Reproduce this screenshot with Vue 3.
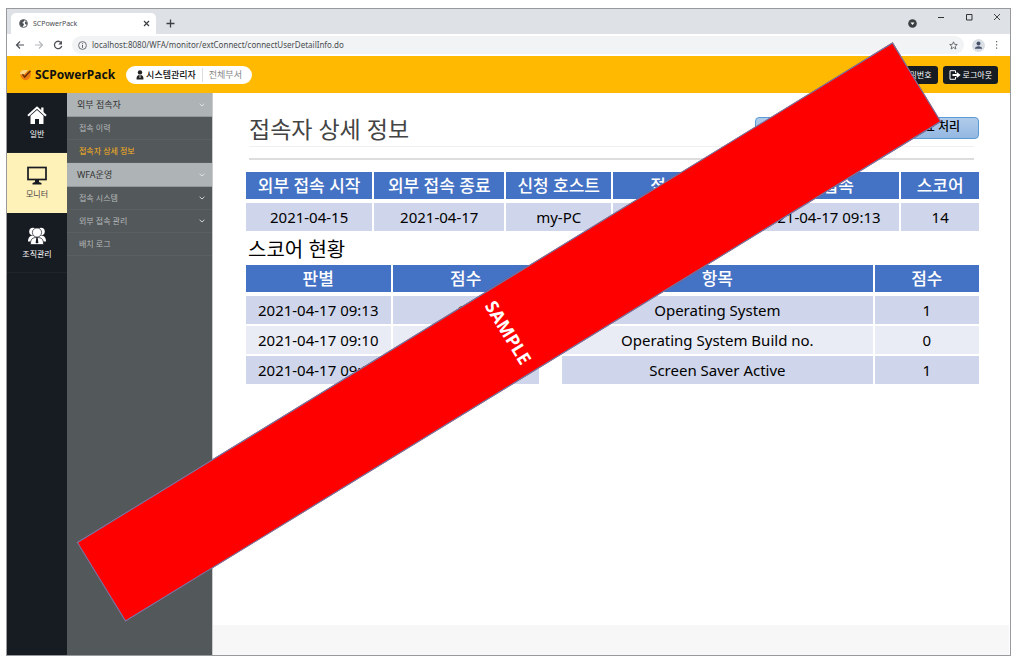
<script setup>
const rail = [
  { label: '일반', icon: 'home' },
  { label: '모니터', icon: 'monitor', active: true },
  { label: '조직관리', icon: 'people' },
]

const groups = [
  {
    title: '외부 접속자',
    items: [{ label: '접속 이력' }, { label: '접속자 상세 정보', active: true }],
  },
  {
    title: 'WFA운영',
    items: [
      { label: '접속 시스템', more: true },
      { label: '외부 접속 관리', more: true },
      { label: '배치 로그' },
    ],
  },
]

const sessionHead = ['외부 접속 시작', '외부 접속 종료', '신청 호스트', '접속 IP', '최종 접속', '스코어']
const sessionRow = ['2021-04-15', '2021-04-17', 'my-PC', '', '2021-04-17 09:13', '14']

const history = [
  ['2021-04-17 09:13', '14'],
  ['2021-04-17 09:10', ''],
  ['2021-04-17 09:07', ''],
]
const checks = [
  ['Operating System', '1'],
  ['Operating System Build no.', '0'],
  ['Screen Saver Active', '1'],
]
</script>

<template>
  <div class="page">
    <div class="window">
      <div class="tabstrip">
        <div class="tab">
          <svg class="globe" viewBox="0 0 10 10"><circle cx="5" cy="5" r="4.400" fill="none" stroke="#4d5156" stroke-width="1" /><path d="M1 3.500C2 1.200 4.500.6 6 1c.5 1-.8 1.200-1 2-.3.900-1.300.6-1.400 1.400 1 .3 2.100.5 1.900 1.700-.2 1-1.100 1.200-1.300 2.800C2 8.500.4 6 1 3.500zM7.500 2.500C8.800 3.500 9.200 5 8.800 6.300 8 6.500 7.300 6 6.800 5.200 6.300 4.300 6.600 3 7.500 2.500z" fill="#4d5156" /></svg>
          <span class="tab-title">SCPowerPack</span>
          <button class="plain" aria-label="Close tab"><svg width="7" height="7" viewBox="0 0 7 7"><path d="M1 1l5 5M6 1L1 6" stroke="#3c4043" stroke-width="1.200" /></svg></button>
        </div>
        <button class="plain new-tab" aria-label="New tab"><svg width="9" height="9" viewBox="0 0 9 9"><path d="M4.500 .5v8M.5 4.500h8" stroke="#3c4043" stroke-width="1.300" /></svg></button>
        <div class="window-buttons">
          <button class="plain guest" aria-label="Search tabs"><svg width="9" height="9" viewBox="0 0 9 9"><circle cx="4.500" cy="4.500" r="4.300" fill="#3c4043" /><path d="M2.500 3.500h4l-2 2.500z" fill="#fff" /></svg></button>
          <button class="plain" aria-label="Minimize"><svg width="8" height="8" viewBox="0 0 8 8"><path d="M1 4.500h6" stroke="#333" /></svg></button>
          <button class="plain" aria-label="Maximize"><svg width="8" height="8" viewBox="0 0 8 8"><path d="M1.500 1.500h5.500v5.500H1.500z" fill="none" stroke="#333" /></svg></button>
          <button class="plain" aria-label="Close"><svg width="8" height="8" viewBox="0 0 8 8"><path d="M1 1l6 6M7 1L1 7" stroke="#333" stroke-width=".9" /></svg></button>
        </div>
      </div>

      <div class="toolbar">
        <button class="plain" aria-label="Back"><svg width="10" height="10" viewBox="0 0 10 10"><path d="M9 5H1.500M5 1.500L1.500 5 5 8.500" fill="none" stroke="#4d5156" stroke-width="1.200" /></svg></button>
        <button class="plain" aria-label="Forward"><svg width="10" height="10" viewBox="0 0 10 10"><path d="M1 5h7.500M5 1.500L8.500 5 5 8.500" fill="none" stroke="#b4b7ba" stroke-width="1.100" /></svg></button>
        <button class="plain" aria-label="Reload"><svg width="10" height="10" viewBox="0 0 10 10"><path d="M8 2.600A3.700 3.700 0 1 0 8.700 6" fill="none" stroke="#4d5156" stroke-width="1.300" /><path d="M9 .8v3.700H5.300z" fill="#4d5156" /></svg></button>
        <div class="address">
          <svg width="9" height="9" viewBox="0 0 9 9"><circle cx="4.500" cy="4.500" r="3.900" fill="none" stroke="#5f6368" stroke-width=".9" /><path d="M4.500 4v2.800M4.500 2.200v1" stroke="#5f6368" /></svg>
          <input class="url" aria-label="Address" value="localhost:8080/WFA/monitor/extConnect/connectUserDetailInfo.do" />
          <button class="plain" aria-label="Bookmark"><svg width="9" height="9" viewBox="0 0 9 9"><path d="M4.500 .8l1.100 2.500 2.700.2-2.100 1.800.7 2.700-2.400-1.500L2.100 8l.7-2.700L.7 3.500l2.700-.2z" fill="none" stroke="#5f6368" stroke-width=".9" /></svg></button>
        </div>
        <button class="plain avatar" aria-label="Profile"><svg width="13" height="13" viewBox="0 0 13 13"><circle cx="6.500" cy="6.500" r="6.500" fill="#dadfe6" /><circle cx="6.500" cy="4.500" r="2" fill="#46536a" /><path d="M2.800 9.800c0-3.400 7.400-3.400 7.400 0z" fill="#46536a" /></svg></button>
        <button class="plain dots" aria-label="Menu"><svg width="3" height="10" viewBox="0 0 3 10"><path d="M1 1h1.200v1.200H1zM1 4.300h1.200v1.200H1zM1 7.600h1.200v1.200H1z" fill="#5f6368" /></svg></button>
      </div>

      <header class="appbar">
        <a class="brand" href="#">
          <svg width="13" height="12" viewBox="0 0 13 12"><path d="M1.500 2.500C3 1.200 5 1.500 6 1.200l5.500 1.300c.6 2.500.3 4.500-.6 6.200C9 11.500 5.500 12 3.200 9.800 1.500 8.200.8 5 1.500 2.500z" fill="#ee7b12" /><path d="M1.500 2.500C3.500 1 7 .8 9 1.500L4.500 6 1 5z" fill="#ffd780" /><path d="M3.500 5.200l2.200 2.800L11.500 1.800" fill="none" stroke="#6b3208" stroke-width="1.500" /></svg>
          <span>SCPowerPack</span>
        </a>
        <div class="user-pill">
          <svg width="8" height="10" viewBox="0 0 8 10"><circle cx="4" cy="2.400" r="2.200" fill="#222" /><path d="M.6 9.500C.3 6 1.800 4.900 4 4.900S7.700 6 7.400 9.500z" fill="#222" /><path d="M4 5v3" stroke="#fff" stroke-width=".8" /></svg>
          <strong>시스템관리자</strong>
          <span class="dept">전체부서</span>
        </div>
        <div class="account">
          <button class="dark">비밀번호</button>
          <button class="dark">
            <svg width="12" height="10" viewBox="0 0 12 10"><path d="M6.500 3V.7H1v8.600h5.500V7" fill="none" stroke="#fff" stroke-width="1" /><path d="M3.500 4h4.200V1.900L11.700 5 7.700 8.100V6H3.500z" fill="#fff" /></svg>
            로그아웃
          </button>
        </div>
      </header>

      <div class="body">
        <nav class="rail">
          <a v-for="r in rail" :key="r.label" href="#" :class="{ active: r.active }">
            <svg v-if="r.icon === 'home'" width="20" height="19" viewBox="0 0 20 19"><path d="M1 9.800L10 1.500l9 8.300" fill="none" stroke="#fff" stroke-width="2" /><path d="M14.200 1.500h2.300v5.500l-2.300-2z" fill="#fff" /><path d="M3.500 9.800L10 4l6.500 5.800V18H12v-5H8v5H3.500z" fill="#fff" /></svg>
            <svg v-else-if="r.icon === 'monitor'" width="20" height="19" viewBox="0 0 20 19"><rect x="1" y="1.500" width="18" height="12" fill="none" stroke="#171b22" stroke-width="1.700" /><path d="M8 14h4v2l2.500 1v1.500h-9V17L8 16z" fill="#171b22" /></svg>
            <svg v-else width="20" height="19" viewBox="0 0 20 19"><g fill="#fff"><circle cx="6" cy="5.500" r="3.800" /><circle cx="14" cy="5.500" r="3.800" /><path d="M1 15.500c0-4 2-6 5-6h8c3 0 5 2 5 6z" /></g><g fill="#fff" stroke="#171b22" stroke-width=".7"><path d="M3.500 18.500c0-5.500 1.800-7 6.500-7s6.500 1.500 6.500 7z" /><circle cx="10" cy="6.500" r="4.600" /></g><path d="M9.300 11.800h1.400l.6 4.500-1.300 1.500-1.300-1.500z" fill="#171b22" /></svg>
            <span>{{ r.label }}</span>
          </a>
        </nav>

        <nav class="submenu">
          <template v-for="g in groups" :key="g.title">
            <button class="group">
              <span>{{ g.title }}</span>
              <svg width="6" height="4" viewBox="0 0 6 4"><path d="M.6 .8L3 3 5.400 .8" fill="none" stroke="#e1e3e4" /></svg>
            </button>
            <a v-for="i in g.items" :key="i.label" href="#" :class="{ active: i.active }">
              <span>{{ i.label }}</span>
              <svg v-if="i.more" width="6" height="4" viewBox="0 0 6 4"><path d="M.6 .8L3 3 5.400 .8" fill="none" stroke="#d0d3d4" /></svg>
            </a>
          </template>
        </nav>

        <div class="content">
          <main>
            <div class="heading">
              <h1>접속자 상세 정보</h1>
              <button class="action">외부 접속자 강제 종료 처리</button>
            </div>
            <hr />

            <table class="session">
              <colgroup><col class="c17" /><col class="c18" /><col class="c15" /><col class="c17" /><col class="c22" /><col class="c11" /></colgroup>
              <thead>
                <tr><th v-for="h in sessionHead" :key="h">{{ h }}</th></tr>
              </thead>
              <tbody>
                <tr><td v-for="(c, n) in sessionRow" :key="n">{{ c }}</td></tr>
              </tbody>
            </table>

            <h2>스코어 현황</h2>
            <div class="scores">
              <table>
                <colgroup><col class="half" /><col class="half" /></colgroup>
                <thead><tr><th>판별</th><th>점수</th></tr></thead>
                <tbody>
                  <tr v-for="row in history" :key="row[0]"><td v-for="(c, n) in row" :key="n">{{ c }}</td></tr>
                </tbody>
              </table>
              <table>
                <colgroup><col class="wide" /><col class="narrow" /></colgroup>
                <thead><tr><th>항목</th><th>점수</th></tr></thead>
                <tbody>
                  <tr v-for="row in checks" :key="row[0]"><td v-for="(c, n) in row" :key="n">{{ c }}</td></tr>
                </tbody>
              </table>
            </div>
          </main>
          <footer></footer>
        </div>
      </div>

      <div class="ribbon">SAMPLE</div>
    </div>
  </div>
</template>

<style>
body {
  background: #fff;
}
</style>

<style scoped>
.page,
.page * {
  box-sizing: border-box;
}
.page {
  display: flex;
  min-height: 100vh;
  padding: 8px 8px 9px 6px;
  font-family: "Noto Sans", "Noto Sans CJK KR", sans-serif;
  color: #000;
}
.window {
  position: relative;
  flex: 1;
  min-width: 0;
  display: flex;
  flex-direction: column;
  border: 1px solid #97999c;
  background: #fff;
}
button,
input {
  font-family: inherit;
}
a {
  text-decoration: none;
}
svg {
  display: block;
  flex: none;
}
.plain {
  display: flex;
  padding: 0;
  border: 0;
  background: none;
}

.tabstrip {
  display: flex;
  height: 25px;
  background: #dee1e6;
}
.tab {
  display: flex;
  align-items: center;
  width: 145px;
  margin: 4px 0 0 4px;
  padding: 0 6px 0 8px;
  border-radius: 5px 5px 0 0;
  background: #fff;
}
.globe {
  width: 9px;
  height: 9px;
}
.tab-title {
  flex: 1;
  margin-left: 5px;
  font-size: 7px;
  line-height: 12px;
  color: #4a4d51;
}
.new-tab {
  align-items: center;
  margin: 4px 0 0 10px;
}
.window-buttons {
  display: flex;
  gap: 20px;
  margin: 4px 9px 0 auto;
}
.window-buttons .plain {
  align-self: flex-start;
}
.window-buttons .guest {
  margin-top: 6px;
}

.toolbar {
  display: flex;
  align-items: center;
  gap: 9px;
  height: 22px;
  padding: 0 10px 0 8px;
}
.address {
  flex: 1;
  display: flex;
  align-items: center;
  height: 18px;
  padding: 0 6px;
  border-radius: 9px;
  background: #f1f3f4;
}
.url {
  flex: 1;
  min-width: 0;
  margin-left: 5px;
  padding: 0;
  border: 0;
  background: none;
  font-size: 8px;
  line-height: 14px;
  color: #4a4d51;
}
.avatar {
  margin-left: -1px;
}
.dots {
  margin: 0 2px 0 1px;
}

.appbar {
  display: flex;
  align-items: center;
  height: 37px;
  padding: 0 12px;
  background: #ffb900;
}
.brand {
  display: flex;
  align-items: center;
  gap: 3px;
  font-size: 12px;
  line-height: 16px;
  font-weight: 700;
  color: #111;
}
.user-pill {
  display: flex;
  align-items: center;
  height: 18px;
  margin-left: 11px;
  padding: 0 10px;
  border-radius: 9px;
  background: #fff;
  font-size: 9px;
  line-height: 14px;
  color: #111;
}
.user-pill strong {
  margin-left: 2px;
  font-weight: 500;
}
.dept {
  margin-left: 6px;
  padding-left: 6px;
  border-left: 1px solid #ddd;
  color: #888;
}
.account {
  display: flex;
  gap: 5px;
  margin-left: auto;
}
.dark {
  display: flex;
  align-items: center;
  gap: 2px;
  height: 18px;
  padding: 0 6px;
  border: 0;
  border-radius: 3px;
  background: #171b22;
  font-size: 8px;
  line-height: 12px;
  color: #fff;
}

.body {
  flex: 1;
  display: flex;
}
.rail {
  width: 60px;
  background: #171b22;
}
.rail a {
  display: flex;
  flex-direction: column;
  align-items: center;
  justify-content: center;
  gap: 3px;
  height: 60px;
  border-bottom: 1px solid #20252c;
  font-size: 8px;
  line-height: 12px;
  color: #fff;
}
.rail a.active {
  border-bottom-color: #fff2b8;
  background: #fff2b8;
  color: #444;
}
.submenu {
  width: 146px;
  border-right: 1px solid #c9cbcc;
  background: #53585b;
}
.submenu a,
.group {
  display: flex;
  align-items: center;
  justify-content: space-between;
  width: 100%;
  height: 23px;
  padding: 0 7px 0 12px;
  border: 0;
  border-bottom: 1px solid #5a5f62;
  font-size: 8px;
  line-height: 12px;
  color: #b5b8ba;
}
.group {
  height: 24px;
  padding-left: 10px;
  border-bottom-color: #94999b;
  background: #aeb3b6;
  font-size: 9px;
  color: #333;
}
.submenu a.active {
  color: #ffb31a;
}

.content {
  flex: 1;
  min-width: 0;
  display: flex;
  flex-direction: column;
}
main {
  flex: 1;
  padding: 18px 31px 0 33px;
}
footer {
  height: 30px;
  margin-right: 1px;
  background: #f7f7f7;
}
.heading {
  display: flex;
  align-items: center;
  justify-content: space-between;
  height: 35px;
  padding-left: 3px;
}
h1 {
  margin: 0;
  font-size: 23px;
  line-height: 32px;
  font-weight: 400;
  color: #444;
}
.action {
  align-self: flex-start;
  width: 224px;
  height: 22px;
  margin-top: 6px;
  padding: 0 18px 2px;
  border: 1px solid #5b9bd5;
  border-radius: 4px;
  background: linear-gradient(#b0cbea, #94b8e2);
  font-size: 12px;
  line-height: 16px;
  font-weight: 500;
  text-align: right;
  color: #000;
}
hr {
  height: 14px;
  margin: 0 5px 12px 3px;
  border: solid #ddd;
  border-width: 1px 0 2px;
  border-top-color: #f0f0f0;
}
table {
  width: 100%;
  table-layout: fixed;
  border-spacing: 0;
}
th,
td {
  height: 30px;
  padding: 0;
  border: solid #fff;
  border-width: 0 2px 2px 0;
  background: #cfd5ea;
  background-clip: padding-box;
  font-size: 15px;
  line-height: 20px;
  text-align: center;
  white-space: nowrap;
}
th {
  height: 31px;
  border-bottom-width: 4px;
  background-color: #4472c4;
  font-size: 17px;
  font-weight: 500;
  color: #fff;
}
th:last-child,
td:last-child {
  border-right: 0;
}
tr:nth-child(even) td {
  background-color: #e9ebf5;
}
.c17 {
  width: 17.500%;
}
.c18 {
  width: 18%;
}
.c15 {
  width: 14.600%;
}
.c22 {
  width: 21.800%;
}
.c11 {
  width: 10.600%;
}
h2 {
  margin: 3px 0 1px 2px;
  font-size: 20px;
  line-height: 28px;
  font-weight: 400;
}
.scores {
  display: grid;
  grid-template-columns: 293fr 417fr;
  gap: 23px;
}
.half {
  width: 50%;
}
.wide {
  width: 75%;
}
.narrow {
  width: 25%;
}

.ribbon {
  position: absolute;
  top: 50%;
  left: 50%;
  display: flex;
  align-items: center;
  justify-content: center;
  width: 93px;
  height: 957px;
  border: 1px solid #5b86b8;
  background: #f00;
  font-size: 18px;
  line-height: 24px;
  font-weight: 700;
  color: #fff;
  transform: translate(-50%, -50%) rotate(58.500deg);
}
</style>
